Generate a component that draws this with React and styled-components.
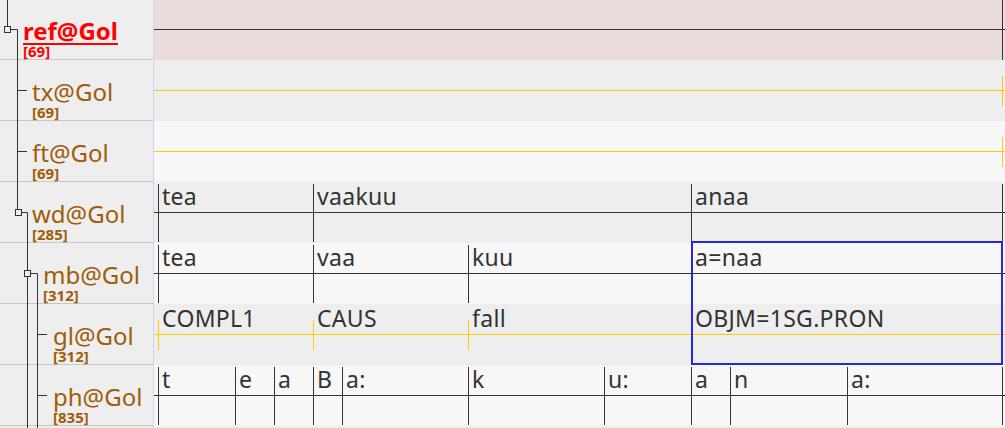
import styled, { createGlobalStyle } from "styled-components";

const GlobalStyle = createGlobalStyle`
  html, body {
    margin: 0;
    padding: 0;
    background: #eeeeee;
    overflow: hidden;
  }
`;

const ROW = 61;
const PANEL_X = 154;

const Viewer = styled.div`
  display: flex;
  width: 1005px;
  height: 428px;
  overflow: hidden;
  font-family: "Noto Sans", "Open Sans", sans-serif;
`;

const NamePanel = styled.div`
  position: relative;
  width: 153px;
  flex: none;
  border-right: 1px solid #d2d2f2;
  background: #eeeeee;
  margin-top: -1px;
`;

const NameRow = styled.div`
  height: ${ROW}px;
  box-sizing: border-box;
  border-bottom: 1px solid #c8c8c8;
  padding-left: ${(p) => p.$indent}px;
  padding-top: 20px;
  display: flex;
  flex-direction: column;
`;

const TierName = styled.span`
  font-size: 24px;
  line-height: 24px;
  color: ${(p) => (p.$active ? "#ff0000" : "#a05c08")};
  font-weight: ${(p) => (p.$active ? 700 : 400)};
  text-decoration: ${(p) => (p.$active ? "underline" : "none")};
  text-underline-offset: 3px;
  text-decoration-thickness: 2px;
  white-space: nowrap;
`;

const TierCount = styled.span`
  font-size: 15px;
  line-height: 15px;
  font-weight: 700;
  margin-top: 1px;
  color: ${(p) => (p.$active ? "#ff0000" : "#a05c08")};
`;

const TreeLines = styled.svg`
  position: absolute;
  left: 0;
  top: 1px;
  pointer-events: none;
`;

const TrackPanel = styled.div`
  position: relative;
  flex: 1;
  margin-top: -1px;
`;

const Track = styled.div`
  display: flex;
  height: ${ROW}px;
  padding-left: ${(p) => p.$offset}px;
  box-sizing: border-box;
  background:
    linear-gradient(
      to bottom,
      transparent 30px,
      ${(p) => p.$line} 30px,
      ${(p) => p.$line} 31px,
      transparent 31px
    ),
    ${(p) => p.$bg};
  background-size: 100% 100%;
`;

const Cell = styled.div`
  position: relative;
  flex: none;
  width: ${(p) => p.$width}px;
  height: 100%;
  box-sizing: border-box;
  padding: 3px 0 0 4px;
  font-size: 23px;
  line-height: 23px;
  letter-spacing: 0.3px;
  color: #333333;
  white-space: nowrap;

  &::before,
  &::after {
    content: "";
    position: absolute;
    top: ${(p) => p.$markTop}px;
    height: ${(p) => p.$markHeight}px;
    width: 1px;
    background: ${(p) => p.$mark};
  }
  &::before {
    left: 0;
    display: ${(p) => (p.$start ? "block" : "none")};
  }
  &::after {
    right: 0;
    display: ${(p) => (p.$end ? "block" : "none")};
  }
`;

const Selection = styled.div`
  position: absolute;
  left: ${691 - PANEL_X}px;
  top: 242px;
  width: 312px;
  height: 124px;
  box-sizing: border-box;
  border: 2px solid #2828e2;
  pointer-events: none;
`;

const DARK = "#333333";
const GOLD = "#ffcc00";

const tiers = [
  { name: "ref@Gol", count: 69, indent: 23, active: true },
  { name: "tx@Gol", count: 69, indent: 32 },
  { name: "ft@Gol", count: 69, indent: 32 },
  { name: "wd@Gol", count: 285, indent: 32 },
  { name: "mb@Gol", count: 312, indent: 43 },
  { name: "gl@Gol", count: 312, indent: 53 },
  { name: "ph@Gol", count: 835, indent: 53 },
  { name: "", count: null, indent: 53 },
];

const full = { line: DARK, mark: DARK, markTop: 2, markHeight: 58 };
const ticks = { line: GOLD, mark: GOLD, markTop: 16, markHeight: 30 };

const tracks = [
  {
    bg: "#eadcdc",
    ...full,
    markTop: 1,
    markHeight: 60,
    open: true,
    bounds: [154, 1002],
    texts: [""],
  },
  { bg: "#eeeeee", ...ticks, open: true, bounds: [154, 1002], texts: [""] },
  { bg: "#f7f7f7", ...ticks, open: true, bounds: [154, 1002], texts: [""] },
  {
    bg: "#eeeeee",
    ...full,
    bounds: [158, 313, 691, 1002],
    texts: ["tea", "vaakuu", "anaa"],
  },
  {
    bg: "#f7f7f7",
    ...full,
    bounds: [158, 313, 468, 691, 1002],
    texts: ["tea", "vaa", "kuu", "a=naa"],
  },
  {
    bg: "#eeeeee",
    ...ticks,
    bounds: [158, 313, 468, 691, 1002],
    texts: ["COMPL1", "CAUS", "fall", "OBJM=1SG.PRON"],
  },
  {
    bg: "#f7f7f7",
    ...full,
    bounds: [158, 235, 274, 313, 342, 468, 604, 691, 730, 847, 1002],
    texts: ["t", "e", "a", "B", "a:", "k", "u:", "a", "n", "a:"],
  },
  { bg: "#eeeeee", ...full, bounds: [], texts: [] },
];

function Tree() {
  const box = (x, y) => (
    <rect x={x + 0.5} y={y + 0.5} width="6" height="6" fill="#eeeeee" stroke="#333" />
  );
  return (
    <TreeLines width="153" height="430" viewBox="0 0 153 430">
      <g stroke="#333" strokeWidth="1" fill="none">
        <path d="M7.5 -2 V26 M11 29.5 H17.5 V209" />
        <path d="M17 90.5 H27 M17 151.5 H27" />
        <path d="M21 212.5 H27.5 V430" />
        <path d="M30 273.5 H37.5 V430" />
        <path d="M37 334.5 H47 M37 395.5 H47" />
      </g>
      {box(4, 26)}
      {box(15, 209)}
      {box(24, 270)}
    </TreeLines>
  );
}

function TierTrack({ track }) {
  const { bounds, texts } = track;
  const offset = bounds.length ? bounds[0] - PANEL_X : 0;
  return (
    <Track $bg={track.bg} $line={track.line} $offset={offset}>
      {texts.map((text, i) => {
        const last = i === texts.length - 1;
        const width = bounds[i + 1] - bounds[i] + (last ? 1 : 0);
        return (
          <Cell
            key={i}
            $width={width}
            $mark={track.mark}
            $markTop={track.markTop}
            $markHeight={track.markHeight}
            $start={!track.open}
            $end={last}
          >
            {text}
          </Cell>
        );
      })}
    </Track>
  );
}

export default function App() {
  return (
    <>
      <GlobalStyle />
      <Viewer>
        <NamePanel>
          {tiers.map((t, i) => (
            <NameRow key={i} $indent={t.indent}>
              <TierName $active={t.active}>{t.name}</TierName>
              {t.count !== null && (
                <TierCount $active={t.active}>[{t.count}]</TierCount>
              )}
            </NameRow>
          ))}
          <Tree />
        </NamePanel>
        <TrackPanel>
          {tracks.map((track, i) => (
            <TierTrack key={i} track={track} />
          ))}
          <Selection />
        </TrackPanel>
      </Viewer>
    </>
  );
}
